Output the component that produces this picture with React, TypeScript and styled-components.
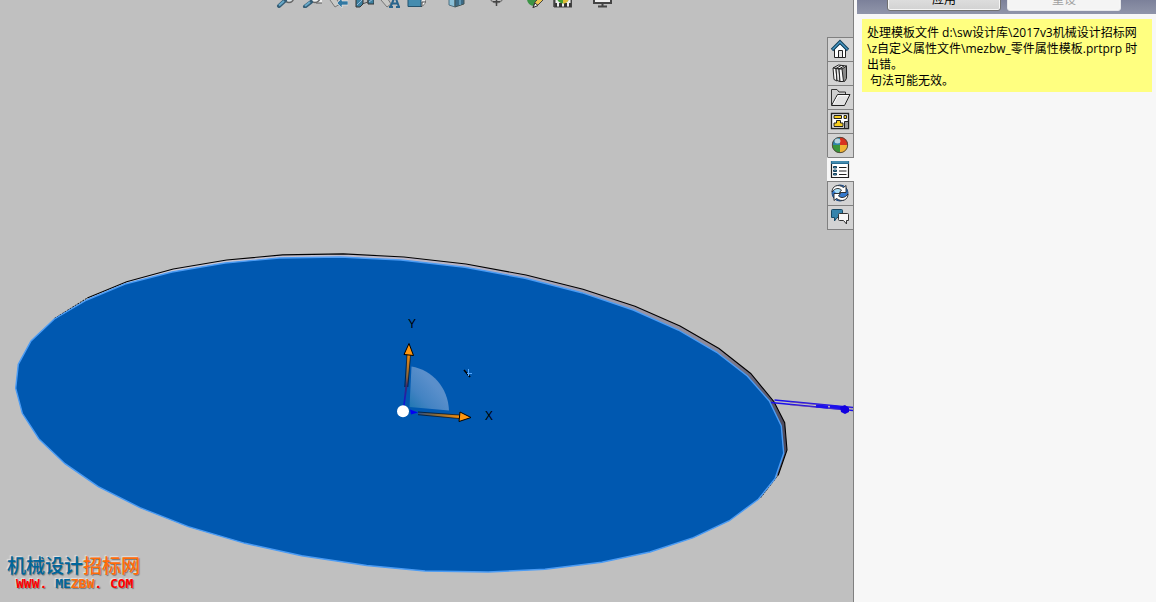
import React from 'react';
import styled, { createGlobalStyle } from 'styled-components';

const GlobalStyle = createGlobalStyle`
  * { box-sizing: border-box; }
  body {
    margin: 0;
    background: #f7f7f7;
    font: 12px/16px "Open Sans", "Noto Sans CJK SC", sans-serif;
    color: #000;
  }
`;

const Window = styled.div`
  display: flex;
  min-height: 100vh;
`;

const Viewport = styled.main`
  position: relative;
  flex: 1;
  min-width: 0;
  display: flex;
  flex-direction: column;
  background: #c0c0c0;
  border-right: 1px solid #808080;
`;

const Scene = styled.svg`
  position: absolute;
  inset: 0;
  width: 100%;
  height: 100%;
  font-family: "Liberation Sans", Arial, sans-serif;
  font-size: 12px;
`;

const HeadsUpToolbar = styled.div`
  position: relative;
  display: flex;
  align-items: flex-end;
  height: 8px;
  margin-bottom: 28px;
  padding-left: 276px;
  overflow: hidden;
`;

const ToolButton = styled.button<{ $gap?: number }>`
  flex: none;
  width: 20px;
  height: 20px;
  margin: 0 ${(p) => p.$gap ?? 6}px 0 0;
  padding: 0;
  border: 0;
  background: none;
  svg { display: block; }
`;

const TabStrip = styled.nav`
  position: relative;
  flex: 1;
  display: flex;
  flex-direction: column;
  align-items: flex-end;
`;

const TabList = styled.div`
  width: 26px;
  padding-top: 1px;
  border-bottom: 1px solid #808080;
`;

const Tab = styled.button<{ $active?: boolean }>`
  display: flex;
  align-items: center;
  width: ${(p) => (p.$active ? 27 : 26)}px;
  height: 24px;
  padding: 0 0 1px 3px;
  border: 0 solid #808080;
  border-top-width: 1px;
  border-left: 1px solid ${(p) => (p.$active ? '#f7f7f7' : '#808080')};
  background: ${(p) => (p.$active ? '#f7f7f7' : '#d3d3d3')};
`;

const Watermark = styled.footer`
  position: relative;
  align-self: flex-start;
  padding: 0 0 11px 7px;
  white-space: pre;
  text-shadow: 1px 1px 1px #777, -1px -1px 1px #e4e4e4;
`;

const SiteName = styled.div`
  font: 500 19px/24px "Noto Sans CJK SC", sans-serif;
`;

const SiteUrl = styled.div`
  padding-left: 9px;
  font: 700 13px/14px "DejaVu Sans Mono", monospace;
`;

const Ink = styled.span<{ $color: string }>`
  color: ${(p) => p.$color};
`;

const TaskPane = styled.aside`
  flex: 0 0 302px;
  padding-left: 3px;
  background: #f7f7f7;
`;

const PaneHeader = styled.header`
  display: flex;
  align-items: flex-end;
  gap: 6px;
  height: 14px;
  padding: 0 35px 3px 30px;
  overflow: hidden;
  background: linear-gradient(#7c819a, #9095aa);
`;

const PaneButton = styled.button`
  flex: 1;
  height: 22px;
  padding: 0;
  border: 1px solid #707070;
  border-radius: 3px;
  background: linear-gradient(#f2f2f2 50%, #dddddd 50%, #d2d2d2);
  box-shadow: inset 0 0 0 1px #f6f6f6;
  font: inherit;
  color: #000;
  &:disabled {
    border-color: #e6e7ea;
    background: #f4f4f4;
    color: #a0a0a0;
  }
`;

const Message = styled.p`
  margin: 5px 4px 0 5px;
  padding: 6px 5px 3px;
  background: #ffff80;
`;

const Line = styled.span`
  display: block;
  white-space: pre;
`;

const face =
  '15.7,388.3 18.3,364.3 31,341 54.3,319 86.7,300 125,284 172,272 225,263 279.3,258 340,257 401,260 465,267.3 525,278.3 581.7,292.7 633.3,310 678.3,330 716.7,352.3 747.3,376 769.3,401 781.3,426 783.7,453.3 775,478.7 758.3,499.3 729.3,520.7 693.3,537.7 650,552 601.7,562.3 545,569.3 488.3,572 425,571 366.7,565.5 301.7,555.7 245,543.3 188.3,526.7 140,507.7 98.3,486.7 65,463.7 39,439 22.3,413.3';
const rim =
  '87.3,298 126.7,281.7 173.3,269 226.7,260 282.7,254.9 343.3,253.9 404,257 466,264 526,275 583,289.3 635,306.3 680,326 719,348.5 750.7,373.5 774,401.7 784.7,422.7 787,450 778.3,475';

const Model = () => (
  <Scene viewBox="0 0 853 602" preserveAspectRatio="xMinYMin meet" aria-label="零件">
    <defs>
      <linearGradient id="edge" x1="0" x2="1">
        <stop offset="0" stopColor="#d0d0dc" />
        <stop offset="0.55" stopColor="#b5b2c4" />
        <stop offset="0.9" stopColor="#8b8898" />
        <stop offset="1" stopColor="#4d4a5c" />
      </linearGradient>
      <linearGradient id="sector" x1="0" y1="1" x2="0.6" y2="0.4">
        <stop offset="0" stopColor="#1b75b0" />
        <stop offset="0.5" stopColor="#4383c3" />
        <stop offset="1" stopColor="#5a8fcb" />
      </linearGradient>
      <linearGradient id="shaftY" x1="0" y1="1" x2="0" y2="0">
        <stop offset="0" stopColor="#0a10e8" />
        <stop offset="0.4" stopColor="#3a2870" />
        <stop offset="0.6" stopColor="#8f6534" />
        <stop offset="1" stopColor="#f08c10" />
      </linearGradient>
      <linearGradient id="shaftX">
        <stop offset="0" stopColor="#2a4f88" />
        <stop offset="0.4" stopColor="#80683f" />
        <stop offset="1" stopColor="#f08c10" />
      </linearGradient>
    </defs>
    <polygon points={rim} fill="url(#edge)" />
    <polyline points={rim} fill="none" stroke="#000" strokeWidth="1.1" />
    <path d="M54.3 318.500L87.3 298M778.3 475L760 498.500" stroke="#000" strokeDasharray="2 1" />
    <polygon points={face} fill="#0058b0" stroke="#4c9cf4" strokeWidth="1.4" />

    <path d="M411.5 366.5C432 370 448 387 449 410.5L409.5 407Z" fill="url(#sector)" />
    <path d="M403 407L406 380L407 355H410.5L408 382L404.5 407Z" fill="url(#shaftY)" />
    <path d="M404.8 387L407 355M407.8 387L410.5 355" stroke="#000" strokeWidth="0.6" />
    <polygon points="409,343.5 413.5,355.5 404,354.5" fill="#ff960f" stroke="#000" />
    <path d="M418 412.2L459 415V418.5L418 414.5Z" fill="url(#shaftX)" />
    <path d="M418 412L459 415M418 414.700L459 418.500" stroke="#000" strokeWidth="0.6" />
    <polygon points="460,412 471,417.5 459,421.5" fill="#ff960f" stroke="#000" />
    <path d="M410 409.5L418 412.5L411 414.5Z" fill="#0000f4" />
    <circle cx="403" cy="411.3" r="6" fill="#fff" />
    <text x="408" y="328">Y</text>
    <text x="485" y="420">X</text>
    <path d="M464 370L470 377" stroke="#000" strokeWidth="1.6" />
    <path d="M468.5 369V376M467 373.5H472" stroke="#55a8ff" />

    <g fill="none" stroke="#1c10ec" strokeWidth="1.3">
      <path d="M774.5 400L853 407.5M771 402.5L853 410.5" />
      <path d="M790 402L852 408M790 405L850 410" stroke="#85508c" strokeWidth="0.5" />
      <path d="M816 406L828 407M830 406.500L848 408.5" strokeWidth="3" />
    </g>
    <path d="M840 407L845 405L849 408V412L845 414L841 412Z" fill="#1200e0" />
  </Scene>
);

/* Heads-up view icons; only their lower part shows under the window edge. */
const tools: { label: string; gap?: number; art: React.ReactNode }[] = [
  { label: '整屏显示全图', art: <><circle cx="13" cy="10" r="4.5" fill="#d9e2e6" stroke="#666" strokeWidth="1.5" /><path d="M3 18L9 12.500" stroke="#345d76" strokeWidth="4" strokeLinecap="round" /><path d="M3 17.5L8 13" stroke="#68a9c9" strokeWidth="2" /></> },
  { label: '局部放大', art: <><path d="M14 8H20.5V15H14" fill="#eee" stroke="#555" /><circle cx="13" cy="9.500" r="5" fill="#e8ecee" stroke="#666" strokeWidth="1.500" /><path d="M3 18.500L9 14" stroke="#345d76" strokeWidth="4" strokeLinecap="round" /><path d="M3 18L8 14" stroke="#68a9c9" strokeWidth="2" /></> },
  { label: '上一视图', art: <><path d="M2 12L7 19L12 16L6 8Z" fill="#c9c9c6" stroke="#777" /><path d="M9 15L14 10V13H20V17H14V20Z" fill="#3278a2" stroke="#eee" strokeWidth="0.6" /></> },
  { label: '剖面视图', art: <><path d="M8 9H14V14L8 16Z" fill="#bbb" stroke="#555" /><path d="M2 9H9V16L6 19H2Z" fill="#3d809f" stroke="#333" /><path d="M14 9H20V16H14Z" fill="#3d809f" stroke="#333" /><path d="M3 17L8 12M15 14L19 11" stroke="#9bd" /></> },
  { label: '注解视图', art: <><path d="M1 12L7 19L11 16L6 8Z" fill="#c9c9c6" stroke="#777" /><path d="M9 19H13M16 19H20.500M10.500 19L15 8L19 19M12 15.500H18" fill="none" stroke="#28648c" strokeWidth="2" /></> },
  { label: '视图定向', gap: 20, art: <><path d="M15 4H20V14L16 18.500H12Z" fill="#e9e9e9" stroke="#444" /><path d="M2 4H15V18.500H2Z" fill="#458caf" stroke="#24536e" /><path d="M16 18V14H20" fill="#fff" stroke="#444" /></> },
  { label: '显示样式', gap: 20, art: <><path d="M3 8L9 10V19L3 17Z" fill="#8bc0d8" stroke="#517080" /><path d="M9 10L18 8V16L9 19Z" fill="#3c6b86" stroke="#455" /><path d="M14 9V17" stroke="#5f97b4" strokeWidth="2" /></> },
  { label: '隐藏/显示项目', gap: 20, art: <><path d="M4.500 8C3 17 18 17 16.500 8" fill="#ececec" stroke="#777" strokeWidth="1.5" /><path d="M10.5 8V18M7 13.500H14" stroke="#444" strokeWidth="1.5" /></> },
  { label: '编辑外观', art: <><circle cx="8" cy="11" r="7" fill="#3b9445" /><path d="M1 11A7 7 0 0 1 8 4V11Z" fill="#cc3224" /><path d="M7 19.500L9 14L16 7L19 10L12 17Z" fill="#ecc653" stroke="#444" /><path d="M7 19.500L9 15L12 17.500Z" fill="#eee" stroke="#333" /></> },
  { label: '应用布景', gap: 20, art: <><path d="M2 5H20V19H2Z" fill="#eee" stroke="#444" /><path d="M2 17H20" stroke="#333" strokeWidth="4" strokeDasharray="3 2" /><path d="M2.500 5V19M19.500 5V19" stroke="#444" strokeWidth="2" /><circle cx="11" cy="9.500" r="6" fill="#46a234" /><path d="M11 10H17A6 6 0 0 1 11 15.500Z" fill="#e0bb36" /></> },
  { label: '视图设定', art: <><path d="M2 4H19V15H2Z" fill="#eee" stroke="#444" strokeWidth="2" /><path d="M10.500 15V18M6 18.500H15" stroke="#444" strokeWidth="2" /></> },
];

/* Task pane tab icons, drawn on an 18px square. */
const tabs: { label: string; active?: boolean; art: React.ReactNode }[] = [
  {
    label: 'SOLIDWORKS 资源',
    art: <><path d="M3.500 9V17.500H14.500V9L9 3.500Z" fill="#fff" stroke="#222" /><path d="M7.500 17V10.500H11.500V17" fill="#e4e4e4" stroke="#222" /><path d="M1 10L9 2L17 10" fill="none" stroke="#123f5a" strokeWidth="3.400" /><path d="M1.500 9.500L9 2L16.500 9.500" fill="none" stroke="#4a9cc8" strokeWidth="1.300" /></>,
  },
  {
    label: '设计库',
    art: (
      <g stroke="#222" strokeLinejoin="round">
        <path d="M10 4.500L15.500 2V14.500L13.500 17.500L10 16Z" fill="#8a8a8a" />
        <path d="M2 4L7.500 1L15.500 2L11 5Z" fill="#f4f4f4" />
        <path d="M2 4L5 4.500L6 17L3 15.500Z" fill="#fafafa" />
        <path d="M5 4.500L8 5L9 17.500L6 16.500Z" fill="#e6e6e6" />
        <path d="M8 5L11 5L12.500 17.500L9 17.500Z" fill="#fafafa" />
        <path d="M5 4.500L10 1.500M8 5L13 2" fill="none" />
      </g>
    ),
  },
  {
    label: '文件探索器',
    art: <><path d="M.5 17V1.500H6L8 4H14.500V8" fill="#cfcfcf" stroke="#333" /><path d="M.5 17.500L6.500 6.500H19L13.500 17.500Z" fill="#e2e2e2" stroke="#222" /><path d="M2.500 16L7 7.700H17" fill="none" stroke="#fff" /></>,
  },
  {
    label: '视图调色板',
    art: <><path d="M.5 1.500H17.500V16.500H.5Z" fill="#fff" stroke="#222" strokeWidth="1.400" /><path d="M3 3.500H10.500V6.500H3Z" fill="#f8ce20" stroke="#222" /><path d="M13 3.500H15.500V6.500H13Z" fill="#f8ce20" stroke="#222" /><path d="M5.500 8.500H9.500V11H12V14.500H3V11H5.500Z" fill="#f8ce20" stroke="#222" /><path d="M13.500 9.500H17.500V16.500H13.500Z" fill="#999" stroke="#222" /></>,
  },
  {
    label: '外观、布景和贴图',
    art: <><path d="M9 9V1A8 8 0 0 0 1 9Z" fill="#2f84a8" /><path d="M9 9H17A8 8 0 0 0 9 1Z" fill="#d83220" /><path d="M9 9V17A8 8 0 0 0 17 9Z" fill="#efb334" /><path d="M9 9H1A8 8 0 0 0 9 17Z" fill="#39953a" /><circle cx="9" cy="9" r="7.700" fill="none" stroke="#53493d" /><ellipse cx="6.500" cy="5" rx="3" ry="2.500" fill="#fff" opacity=".65" /></>,
  },
  {
    label: '自定义属性',
    active: true,
    art: <><path d="M.5 1.500H17.500V17.500H.5Z" fill="#fff" stroke="#222" strokeWidth="1.200" /><path d="M0 1H18V4H0Z" fill="#286e94" /><path d="M1 2H17" stroke="#5fa9ca" /><g fill="#55a1c5" stroke="#15415c"><path d="M2.500 6.500H5.500V8H2.500Z" /><path d="M2.500 10H5.500V11.500H2.500Z" /><path d="M2.500 13.500H5.500V15H2.500Z" /></g><path d="M8 7.500H15.500M8 11H15.500M8 14.500H15.500" stroke="#222" /></>,
  },
  {
    label: 'SOLIDWORKS 论坛',
    art: <><circle cx="9" cy="9" r="8" fill="#3479cc" stroke="#214b80" /><ellipse cx="8" cy="6" rx="5" ry="3.500" fill="#a9dcf4" /><path d="M1 8C1 2 7 -.5 12.500 3.500L15 1.500V8.500H8.500L10.500 6C7.500 3.500 4 4 1 8Z" fill="#fff" stroke="#222" strokeWidth=".9" /><path d="M17 10C17 16 11 18.500 5.500 14.500L3 16.500V9.500H9.500L7.500 12C10.500 14.500 14 14 17 10Z" fill="#fff" stroke="#222" strokeWidth=".9" /></>,
  },
  {
    label: '讨论',
    art: <><path d="M.5 2.500Q.5 1.500 1.500 1.500H10.500Q11.500 1.500 11.500 2.500V9.500H6L3.500 13V9.500H.5Z" fill="#3584ac" stroke="#174864" /><path d="M8.500 5.500H16.500Q17.500 5.500 17.500 6.500V12.500H15.500V16L12.500 12.500H8.500Q7.500 12.500 7.500 11.500V6.500Q7.500 5.500 8.500 5.500Z" fill="#f7f7f7" stroke="#333" /></>,
  },
];

export default function App() {
  return (
    <>
      <GlobalStyle />
      <Window>
        <Viewport>
          <Model />
          <HeadsUpToolbar>
            {tools.map((t) => (
              <ToolButton key={t.label} aria-label={t.label} $gap={t.gap}>
                <svg width="20" height="20" viewBox="0 0 20 20" fill="none">{t.art}</svg>
              </ToolButton>
            ))}
          </HeadsUpToolbar>
          <TabStrip>
            <TabList>
              {tabs.map((t) => (
                <Tab key={t.label} aria-label={t.label} $active={t.active}>
                  <svg width="18" height="18" viewBox="0 0 18 18" overflow="visible">{t.art}</svg>
                </Tab>
              ))}
            </TabList>
          </TabStrip>
          <Watermark>
            <SiteName>
              <Ink $color="#00669c">机械设计</Ink>
              <Ink $color="#ff6c0a">招标网</Ink>
            </SiteName>
            <SiteUrl>
              <Ink $color="#f00">WWW. </Ink>
              <Ink $color="#00669c">ME</Ink>
              <Ink $color="#ff6c0a">ZBW</Ink>
              <Ink $color="#f00">. COM</Ink>
            </SiteUrl>
          </Watermark>
        </Viewport>
        <TaskPane>
          <PaneHeader>
            <PaneButton>应用</PaneButton>
            <PaneButton disabled>重设</PaneButton>
          </PaneHeader>
          <Message role="alert">
            <Line>处理模板文件 d:\sw设计库\2017v3机械设计招标网</Line>
            <Line>\z自定义属性文件\mezbw_零件属性模板.prtprp 时</Line>
            <Line>出错。</Line>
            <Line> 句法可能无效。</Line>
          </Message>
        </TaskPane>
      </Window>
    </>
  );
}
